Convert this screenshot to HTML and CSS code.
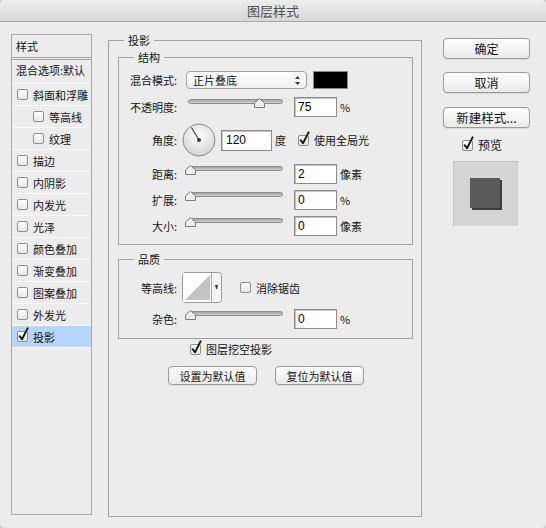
FILE: index.html
```html
<!DOCTYPE html>
<html lang="zh-CN">
<head>
<meta charset="utf-8">
<title>图层样式</title>
<link rel="stylesheet" href="styles.css">
</head>
<body>
<div class="window">
  <div class="titlebar">图层样式</div>
  <div class="content">
    <div class="sidebar">
      <div class="side-head">样式</div>
      <div class="side-blend">混合选项:默认</div>
      <div class="side-item"><span class="cb"></span>斜面和浮雕</div>
      <div class="side-item sub"><span class="cb"></span>等高线</div>
      <div class="side-item sub"><span class="cb"></span>纹理</div>
      <div class="side-item"><span class="cb"></span>描边</div>
      <div class="side-item"><span class="cb"></span>内阴影</div>
      <div class="side-item"><span class="cb"></span>内发光</div>
      <div class="side-item"><span class="cb"></span>光泽</div>
      <div class="side-item"><span class="cb"></span>颜色叠加</div>
      <div class="side-item"><span class="cb"></span>渐变叠加</div>
      <div class="side-item"><span class="cb"></span>图案叠加</div>
      <div class="side-item"><span class="cb"></span>外发光</div>
      <div class="side-item selected"><span class="cb on"><svg class="check" width="13" height="15" viewBox="0 0 13 15"><path d="M2.6 9.2 L5 12.2 L10.6 1.4"/></svg></span>投影</div>
    </div>

    <fieldset class="panel">
      <legend>投影</legend>
      <fieldset class="group structure">
        <legend>结构</legend>
        <div class="row row-blend">
          <span class="lbl">混合模式:</span>
          <div class="select">
            <span class="select-text">正片叠底</span>
            <svg class="select-arrows" width="7" height="11" viewBox="0 0 7 11"><path d="M3.5 1 L6 4 L1 4 Z M3.5 10 L6 7 L1 7 Z"/></svg>
          </div>
          <span class="swatch"></span>
        </div>
        <div class="row row-slider">
          <span class="lbl">不透明度:</span>
          <div class="slider"><div class="track"></div><svg class="thumb" style="left:66px" width="11" height="10" viewBox="0 0 11 10"><path d="M0.5 9.5 L0.5 5 L5.5 0.5 L10.5 5 L10.5 9.5 Z"/></svg></div>
          <span class="num">75</span>
          <span class="unit">%</span>
        </div>
        <div class="row row-angle">
          <span class="lbl">角度:</span>
          <svg class="dial" width="34" height="34" viewBox="0 0 34 34">
            <defs>
              <radialGradient id="dg" cx="50%" cy="35%" r="65%">
                <stop offset="0" stop-color="#ffffff"/>
                <stop offset="1" stop-color="#d4d4d4"/>
              </radialGradient>
            </defs>
            <circle cx="17" cy="17" r="16" fill="url(#dg)" stroke="#8a8a8a" stroke-width="1"/>
            <line x1="17" y1="17" x2="9.5" y2="4.5" stroke="#3a3a3a" stroke-width="1.1"/>
            <circle cx="17" cy="17" r="2" fill="#3a3a3a"/>
          </svg>
          <span class="num num-wide">120</span>
          <span class="unit">度</span>
          <span class="cb on global"><svg class="check" width="13" height="15" viewBox="0 0 13 15"><path d="M2.6 9.2 L5 12.2 L10.6 1.4"/></svg></span>
          <span class="cb-text">使用全局光</span>
        </div>
        <div class="row row-slider row-dist">
          <span class="lbl">距离:</span>
          <div class="slider"><div class="track"></div><svg class="thumb" style="left:-3px" width="11" height="10" viewBox="0 0 11 10"><path d="M0.5 9.5 L0.5 5 L5.5 0.5 L10.5 5 L10.5 9.5 Z"/></svg></div>
          <span class="num">2</span>
          <span class="unit">像素</span>
        </div>
        <div class="row row-slider row-tight">
          <span class="lbl">扩展:</span>
          <div class="slider"><div class="track"></div><svg class="thumb" style="left:-3px" width="11" height="10" viewBox="0 0 11 10"><path d="M0.5 9.5 L0.5 5 L5.5 0.5 L10.5 5 L10.5 9.5 Z"/></svg></div>
          <span class="num">0</span>
          <span class="unit">%</span>
        </div>
        <div class="row row-slider row-tight">
          <span class="lbl">大小:</span>
          <div class="slider"><div class="track"></div><svg class="thumb" style="left:-3px" width="11" height="10" viewBox="0 0 11 10"><path d="M0.5 9.5 L0.5 5 L5.5 0.5 L10.5 5 L10.5 9.5 Z"/></svg></div>
          <span class="num">0</span>
          <span class="unit">像素</span>
        </div>
      </fieldset>

      <fieldset class="group quality">
        <legend>品质</legend>
        <div class="row row-contour">
          <span class="lbl">等高线:</span>
          <svg class="contour" width="40" height="31" viewBox="0 0 40 31">
            <rect x="0.5" y="0.5" width="39" height="30" rx="3" fill="#f4f4f4" stroke="#9a9a9a"/>
            <rect x="1" y="1" width="28" height="29" fill="#ffffff"/>
            <polygon points="3,28 28,3 28,28" fill="#c3c3c3"/>
            <line x1="29.5" y1="1" x2="29.5" y2="30" stroke="#a6a6a6"/>
            <path d="M33 13 L36 13 L35 17 L34 17 Z" fill="#333"/>
          </svg>
          <span class="cb aa"></span>
          <span class="cb-text">消除锯齿</span>
        </div>
        <div class="row row-slider row-noise">
          <span class="lbl">杂色:</span>
          <div class="slider"><div class="track"></div><svg class="thumb" style="left:-3px" width="11" height="10" viewBox="0 0 11 10"><path d="M0.5 9.5 L0.5 5 L5.5 0.5 L10.5 5 L10.5 9.5 Z"/></svg></div>
          <span class="num">0</span>
          <span class="unit">%</span>
        </div>
      </fieldset>

      <div class="knockout">
        <span class="cb on"><svg class="check" width="13" height="15" viewBox="0 0 13 15"><path d="M2.6 9.2 L5 12.2 L10.6 1.4"/></svg></span>
        <span class="cb-text">图层挖空投影</span>
      </div>
      <div class="defaults">
        <button class="btn btn-small" type="button">设置为默认值</button>
        <button class="btn btn-small" type="button">复位为默认值</button>
      </div>
    </fieldset>

    <div class="actions">
      <button class="btn btn-big" type="button">确定</button>
      <button class="btn btn-big btn-cancel" type="button">取消</button>
      <button class="btn btn-big btn-new" type="button">新建样式...</button>
      <div class="preview-row">
        <span class="cb on"><svg class="check" width="13" height="15" viewBox="0 0 13 15"><path d="M2.6 9.2 L5 12.2 L10.6 1.4"/></svg></span>
        <span class="cb-text">预览</span>
      </div>
      <div class="preview">
        <div class="preview-square"></div>
      </div>
    </div>
  </div>
</div>
</body>
</html>
```

FILE: styles.css
```css
* { box-sizing: border-box; }

html, body {
  margin: 0;
  padding: 0;
}

body {
  width: 546px;
  height: 528px;
  background: #cdcdcd;
  font-family: "Noto Sans CJK SC", "Noto Sans", sans-serif;
  font-size: 11px;
  line-height: 14px;
  color: #141414;
  overflow: hidden;
}

.window {
  width: 546px;
  height: 528px;
  background: #ececec;
  border-radius: 5px;
  overflow: hidden;
  display: flex;
  flex-direction: column;
}

.titlebar {
  flex: none;
  height: 22px;
  background: linear-gradient(#eeeeee, #d8d8d8);
  border-bottom: 1px solid #a9a9a9;
  text-align: center;
  font-size: 13px;
  line-height: 22px;
  color: #4f4f4f;
}

.content {
  flex: 1;
  display: flex;
  align-items: flex-start;
  padding: 12px 0 0 11px;
}

/* ---------- sidebar ---------- */
.sidebar {
  flex: none;
  width: 81px;
  height: 481px;
  border: 1px solid #a7a7a7;
  background: #ececec;
}

.side-head {
  height: 23px;
  padding: 4px 0 0 4px;
  border-bottom: 1px solid #a7a7a7;
}

.side-blend {
  height: 25px;
  margin-top: 1px;
  border-top: 1px solid #a7a7a7;
  border-bottom: 1px solid #fbfbfb;
  padding: 3px 0 0 4px;
}

.side-item {
  height: 22px;
  border-bottom: 1px solid #fbfbfb;
  display: flex;
  align-items: center;
  padding-left: 5px;
}

.side-item.sub {
  padding-left: 21px;
}

.side-item.selected {
  background: #b5d5fc;
}

.side-item .cb {
  margin-right: 5px;
}

/* ---------- checkboxes ---------- */
.cb {
  position: relative;
  display: inline-block;
  flex: none;
  width: 11px;
  height: 11px;
  border: 1px solid #8e8e8e;
  border-radius: 2px;
  background: linear-gradient(#ffffff, #e6e6e6);
}

.cb .check {
  position: absolute;
  left: -1px;
  top: -5px;
  overflow: visible;
}

.cb .check path {
  fill: none;
  stroke: #1c1c1c;
  stroke-width: 2;
  stroke-linecap: round;
  stroke-linejoin: round;
}

.cb-text {
  margin-left: 5px;
  white-space: nowrap;
}

/* ---------- main panel ---------- */
fieldset {
  margin: 0;
  padding: 0;
  min-width: 0;
  border: 1px solid #a3a3a3;
}

legend {
  margin-left: 15px;
  padding: 0 4px;
  line-height: 14px;
  font-size: 11px;
}

.panel {
  flex: none;
  width: 314px;
  height: 484px;
  margin: -1px 0 0 16px;
}

.group {
  margin: 3px 8px 0 9px;
}

.structure {
  padding-bottom: 8px;
}

.quality {
  margin-top: 7px;
  padding-bottom: 9px;
}

.row {
  display: flex;
  align-items: center;
}

.lbl {
  flex: none;
  width: 61px;
  padding-right: 3px;
  text-align: right;
  white-space: nowrap;
}

.row-blend {
  margin-top: 7px;
  height: 18px;
}

.select {
  flex: none;
  width: 121px;
  height: 18px;
  margin-left: 6px;
  border: 1px solid #a0a0a0;
  border-radius: 4px;
  background: linear-gradient(#ffffff, #f0f0f0);
  display: flex;
  align-items: center;
  justify-content: space-between;
  padding: 0 5px 0 6px;
}

.select-arrows path {
  fill: #3a3a3a;
}

.swatch {
  flex: none;
  width: 35px;
  height: 18px;
  margin-left: 6px;
  background: #000000;
  border: 1px solid #8a8a8a;
}

.row-slider {
  margin-top: 8px;
  height: 20px;
  align-items: flex-start;
}

.row-slider .lbl,
.row-slider .num,
.row-slider .unit {
  align-self: center;
}

.row-dist {
  margin-top: 7px;
}

.row-tight {
  margin-top: 6px;
}

.slider {
  position: relative;
  flex: none;
  width: 95px;
  height: 20px;
  margin-left: 8px;
}

.track {
  margin-top: 2px;
  height: 5px;
  border: 1px solid #8d8d8d;
  border-radius: 3px;
  background: linear-gradient(#a4a4a4, #cfcfcf);
}

.thumb {
  position: absolute;
  top: 1px;
}

.thumb path {
  fill: #eeeeee;
  stroke: #7a7a7a;
  stroke-width: 1;
}

.num {
  flex: none;
  width: 43px;
  height: 20px;
  margin-left: 11px;
  background: #ffffff;
  border: 1px solid #8c8c8c;
  box-shadow: inset 1px 1px 0 #c4c4c4;
  font-family: "Liberation Sans", Arial, sans-serif;
  font-size: 12px;
  line-height: 18px;
  padding-left: 3px;
  color: #000;
}

.num-wide {
  width: 51px;
  height: 21px;
  margin-left: 5px;
  line-height: 19px;
  padding-left: 4px;
}

.unit {
  margin-left: 3px;
  white-space: nowrap;
}

.row-angle {
  margin-top: 6px;
  height: 34px;
}

.dial {
  flex: none;
  margin-left: 2px;
}

.global {
  margin-left: 12px;
}

.row-contour {
  margin-top: 6px;
  height: 31px;
}

.contour {
  flex: none;
  margin-left: 2px;
}

.aa {
  margin-left: 18px;
}

.row-noise {
  margin-top: 6px;
}

.knockout {
  display: flex;
  align-items: center;
  height: 14px;
  margin-top: 3px;
  padding-left: 81px;
}

.defaults {
  display: flex;
  gap: 18px;
  margin-top: 10px;
  padding-left: 59px;
}

/* ---------- buttons ---------- */
.btn {
  margin: 0;
  padding: 0;
  border: 1px solid #9b9b9b;
  border-radius: 4px;
  background: linear-gradient(#ffffff, #f3f3f3 55%, #e9e9e9);
  box-shadow: 0 1px 0 rgba(0, 0, 0, 0.08);
  font-family: "Noto Sans CJK SC", "Noto Sans", sans-serif;
  color: #141414;
  white-space: nowrap;
}

.btn-small {
  width: 89px;
  height: 19px;
  font-size: 11px;
  line-height: 16px;
}

.btn-big {
  width: 87px;
  height: 21px;
  font-size: 12px;
  line-height: 18px;
}

.actions {
  flex: none;
  width: 87px;
  margin: 4px 0 0 21px;
  display: flex;
  flex-direction: column;
}

.btn-cancel {
  margin-top: 13px;
}

.btn-new {
  margin-top: 14px;
  font-size: 12.5px;
}

.preview-row {
  display: flex;
  align-items: center;
  height: 14px;
  margin-top: 10px;
  padding-left: 19px;
  font-size: 12px;
}

.preview {
  width: 66px;
  height: 66px;
  margin: 9px 0 0 10px;
  background: #d5d5d5;
  border: 1px solid #c2c2c2;
  border-bottom-color: #f4f4f4;
  border-right-color: #e8e8e8;
  display: flex;
  align-items: center;
  justify-content: center;
}

.preview-square {
  width: 30px;
  height: 30px;
  background: #5a5a5a;
  box-shadow: 2px 2px 0 #3c3c3c;
  margin: 0 2px 2px 0;
}
```
